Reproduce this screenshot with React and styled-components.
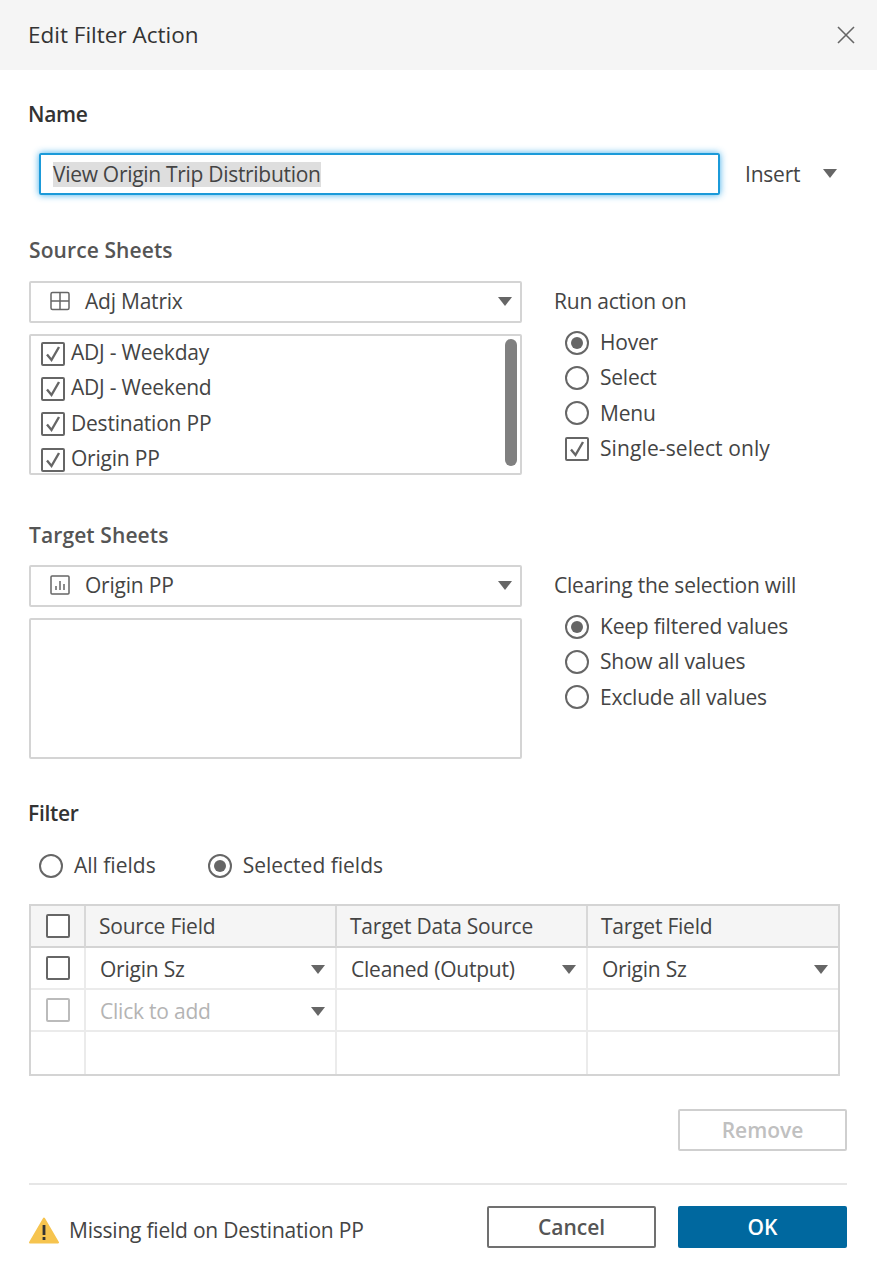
import React from "react";
import styled, { createGlobalStyle } from "styled-components";

const GlobalStyle = createGlobalStyle`
  html, body { margin: 0; padding: 0; background: #fff; }
  body { font-family: "Open Sans", "Noto Sans", sans-serif; color: #444; }
  * { box-sizing: border-box; }
`;

const Dialog = styled.div`
  width: 877px;
  height: 1280px;
  background: #fff;
  overflow: hidden;
  letter-spacing: -0.22px;
`;

const Header = styled.header`
  height: 70px;
  padding: 0 21px 2px 28px;
  display: flex;
  align-items: center;
  justify-content: space-between;
  background: #f5f5f5;
  font-size: 22.5px;
  letter-spacing: 0;
  color: #333;
`;

const CloseIcon = styled.svg`
  margin-top: 2px;
  fill: none;
  stroke: #666;
  stroke-width: 1.6;
`;

const Body = styled.div`
  padding: 0 30px 0 29px;
`;

const SectionTitle = styled.h2`
  margin: ${({ $top }) => $top}px 0 0 ${({ $dark }) => ($dark ? -1 : 0)}px;
  height: 30px;
  line-height: 30px;
  font-size: 21px;
  font-weight: 600;
  letter-spacing: ${({ $dark }) => ($dark ? "-0.3px" : "0.1px")};
  color: ${({ $dark }) => ($dark ? "#333" : "#555")};
`;

const NameRow = styled.div`
  margin-top: 24px;
  padding-left: 10px;
  display: flex;
  align-items: center;
`;

const NameInput = styled.div`
  width: 681px;
  height: 42px;
  padding-left: 12px;
  display: flex;
  align-items: center;
  border: 2px solid #1b9ad9;
  border-radius: 2px;
  box-shadow: 0 0 7px rgba(30, 160, 230, 0.85);
  font-size: 21px;
`;

const Selected = styled.span`
  background: #dedede;
  line-height: 25px;
  letter-spacing: -0.3px;
`;

const InsertButton = styled.div`
  margin-left: 25px;
  width: 92px;
  padding-bottom: 1px;
  display: flex;
  align-items: center;
  justify-content: space-between;
  font-size: 21px;
`;

const Caret = styled.span`
  flex: none;
  width: 0;
  height: 0;
  border-left: 7px solid transparent;
  border-right: 7px solid transparent;
  border-top: 9px solid #666;
`;

const SheetsGrid = styled.div`
  margin-top: ${({ $top }) => $top}px;
  display: grid;
  grid-template-columns: 493px 1fr;
  column-gap: 33px;
`;

const Dropdown = styled.div`
  height: 42px;
  padding: 0 8px 2px 19px;
  display: flex;
  align-items: center;
  border: 2px solid #d4d4d4;
  border-radius: 2px;
  font-size: 21px;
`;

const SheetIcon = styled.svg`
  flex: none;
  width: 20px;
  height: 20px;
  margin-right: 15px;
  fill: none;
  stroke: #666;
  stroke-width: 1.5;
`;

const DropdownLabel = styled.span`
  flex: 1;
`;

const SheetList = styled.div`
  position: relative;
  margin-top: 11px;
  height: 141px;
  padding: 0 0 0 10px;
  border: 2px solid #d4d4d4;
  border-radius: 2px;
  overflow: hidden;
`;

const ScrollThumb = styled.div`
  position: absolute;
  top: 3px;
  right: 3px;
  width: 12px;
  height: 127px;
  border-radius: 6px;
  background: #808080;
`;

const OptionRow = styled.label`
  height: 35.3px;
  display: flex;
  align-items: center;
  gap: ${({ $gap }) => $gap || 6}px;
  font-size: 21px;
  white-space: nowrap;
`;

const OptionText = styled.span`
  margin-top: ${({ $lift }) => -$lift}px;
  letter-spacing: ${({ $spacing }) => $spacing ?? -0.22}px;
`;

const Box = styled.span`
  flex: none;
  width: 24px;
  height: 24px;
  display: flex;
  align-items: center;
  justify-content: center;
  border: 2px solid ${({ $muted }) => ($muted ? "#bbb" : "#666")};
  border-radius: 2px;
  background: #fff;
`;

const CheckMark = styled.svg`
  width: 20px;
  height: 20px;
  fill: none;
  stroke: #666;
  stroke-width: 2.4;
`;

const Radio = styled.span`
  flex: none;
  width: 24px;
  height: 24px;
  display: flex;
  align-items: center;
  justify-content: center;
  border: 2px solid #666;
  border-radius: 50%;

  &::after {
    content: "";
    display: ${({ $on }) => ($on ? "block" : "none")};
    width: 12px;
    height: 12px;
    border-radius: 50%;
    background: #666;
  }
`;

const SideColumn = styled.div`
  padding-top: 2px;
`;

const SideTitle = styled.div`
  margin-left: -1px;
  height: 36px;
  line-height: 36px;
  font-size: 21px;
  white-space: nowrap;
`;

const SideOptions = styled.div`
  margin-top: 6px;
  padding-left: 10px;
`;

const ScopeRow = styled.div`
  margin-top: 20px;
  padding-left: 10px;
  display: flex;
  gap: 52px;
`;

const FieldTable = styled.div`
  margin-top: 21px;
  width: 811px;
  border: 2px solid #d4d4d4;
  display: grid;
  grid-template-columns: 55px 251px 251px 1fr;
`;

const Cell = styled.div`
  height: 42px;
  padding: ${({ $header }) => ($header ? 0 : 2)}px 10px 0 ${({ $header }) => ($header ? 13 : 14)}px;
  display: flex;
  align-items: center;
  justify-content: space-between;
  font-size: 21px;
  color: ${({ $muted }) => ($muted ? "#b4b4b4" : "#444")};
  background: ${({ $header }) => ($header ? "#f5f5f5" : "#fff")};
  border-right: ${({ $last, $header }) =>
    $last ? "0" : `2px solid ${$header ? "#d8d8d8" : "#ebebeb"}`};
  border-bottom: ${({ $header, $end }) =>
    $end ? "0" : `2px solid ${$header ? "#d4d4d4" : "#ebebeb"}`};
`;

const CheckCell = styled(Cell)`
  padding: 0;
  justify-content: center;
`;

const RemoveRow = styled.div`
  margin-top: 33px;
  display: flex;
  justify-content: flex-end;
`;

const Button = styled.button`
  width: 169px;
  height: 42px;
  padding: 0;
  font-family: inherit;
  font-size: 21px;
  font-weight: 600;
  border-radius: 2px;
  border: 2px solid ${({ $variant }) =>
    $variant === "primary" ? "#00689f" : $variant === "disabled" ? "#cfcfcf" : "#707070"};
  background: ${({ $variant }) => ($variant === "primary" ? "#00689f" : "#fff")};
  color: ${({ $variant }) =>
    $variant === "primary" ? "#fff" : $variant === "disabled" ? "#c0c0c0" : "#555"};
`;

const Footer = styled.footer`
  margin-top: 32px;
  padding-top: 21px;
  border-top: 2px solid #e6e6e6;
  display: flex;
  align-items: center;
`;

const Warning = styled.div`
  flex: 1;
  padding-top: 6px;
  display: flex;
  align-items: center;
  gap: 10px;
  font-size: 21px;
  color: #444;
`;

const FooterButtons = styled.div`
  display: flex;
  gap: 22px;
`;

const Check = ({ checked, muted }) => (
  <Box $muted={muted}>
    {checked && (
      <CheckMark viewBox="0 0 20 20">
        <path d="M4 10.5 L8.5 16 L16 3" />
      </CheckMark>
    )}
  </Box>
);

const CheckOption = ({ label }) => (
  <OptionRow>
    <Check checked />
    <OptionText $lift={3}>{label}</OptionText>
  </OptionRow>
);

const RadioOption = ({ label, on, spacing }) => (
  <OptionRow $gap={11}>
    <Radio $on={on} />
    <OptionText $lift={1} $spacing={spacing}>{label}</OptionText>
  </OptionRow>
);

const TableIcon = () => (
  <SheetIcon viewBox="0 0 20 20">
    <rect x="1" y="1.5" width="18" height="17" rx="1.5" />
    <path d="M10 1.5V18.5M1 10H19" />
  </SheetIcon>
);

const BarsIcon = () => (
  <SheetIcon viewBox="0 0 20 20">
    <rect x="1" y="1" width="18" height="18" rx="1" />
    <path d="M6 11V15M10 6V15M14 9V15" />
  </SheetIcon>
);

const App = () => (
  <Dialog>
    <GlobalStyle />
    <Header>
      Edit Filter Action
      <CloseIcon width="20" height="20" viewBox="0 0 20 20">
        <path d="M2 2L18 18M18 2L2 18" />
      </CloseIcon>
    </Header>
    <Body>
      <SectionTitle $dark $top={29}>Name</SectionTitle>
      <NameRow>
        <NameInput>
          <Selected>View Origin Trip Distribution</Selected>
        </NameInput>
        <InsertButton>
          Insert <Caret />
        </InsertButton>
      </NameRow>

      <SectionTitle $top={40}>Source Sheets</SectionTitle>
      <SheetsGrid $top={16}>
        <div>
          <Dropdown>
            <TableIcon />
            <DropdownLabel>Adj Matrix</DropdownLabel>
            <Caret />
          </Dropdown>
          <SheetList>
            <CheckOption label="ADJ - Weekday" />
            <CheckOption label="ADJ - Weekend" />
            <CheckOption label="Destination PP" />
            <CheckOption label="Origin PP" />
            <ScrollThumb />
          </SheetList>
        </div>
        <SideColumn>
          <SideTitle>Run action on</SideTitle>
          <SideOptions>
            <RadioOption label="Hover" on />
            <RadioOption label="Select" />
            <RadioOption label="Menu" />
            <OptionRow $gap={11}>
              <Check checked />
              <OptionText $lift={1} $spacing={0.1}>Single-select only</OptionText>
            </OptionRow>
          </SideOptions>
        </SideColumn>
      </SheetsGrid>

      <SectionTitle $top={45}>Target Sheets</SectionTitle>
      <SheetsGrid $top={15}>
        <div>
          <Dropdown>
            <BarsIcon />
            <DropdownLabel>Origin PP</DropdownLabel>
            <Caret />
          </Dropdown>
          <SheetList />
        </div>
        <SideColumn>
          <SideTitle>Clearing the selection will</SideTitle>
          <SideOptions>
            <RadioOption label="Keep filtered values" on />
            <RadioOption label="Show all values" />
            <RadioOption label="Exclude all values" />
          </SideOptions>
        </SideColumn>
      </SheetsGrid>

      <SectionTitle $dark $top={39}>Filter</SectionTitle>
      <ScopeRow>
        <RadioOption label="All fields" spacing={0} />
        <RadioOption label="Selected fields" on spacing={0} />
      </ScopeRow>

      <FieldTable>
        <CheckCell $header><Check /></CheckCell>
        <Cell $header>Source Field</Cell>
        <Cell $header>Target Data Source</Cell>
        <Cell $header $last>Target Field</Cell>

        <CheckCell><Check /></CheckCell>
        <Cell>Origin Sz <Caret /></Cell>
        <Cell>Cleaned (Output) <Caret /></Cell>
        <Cell $last>Origin Sz <Caret /></Cell>

        <CheckCell><Check muted /></CheckCell>
        <Cell $muted>Click to add <Caret /></Cell>
        <Cell />
        <Cell $last />

        <Cell $end />
        <Cell $end />
        <Cell $end />
        <Cell $end $last />
      </FieldTable>

      <RemoveRow>
        <Button $variant="disabled">Remove</Button>
      </RemoveRow>

      <Footer>
        <Warning>
          <svg width="30" height="27" viewBox="0 0 30 27">
            <path d="M15 1.5 L29 25.5 H1 Z" fill="#f6c44f" stroke="#f6c44f" strokeWidth="2" strokeLinejoin="round" />
            <rect x="13.6" y="8" width="2.8" height="10" fill="#333" />
            <rect x="13.6" y="20" width="2.8" height="3" fill="#333" />
          </svg>
          Missing field on Destination PP
        </Warning>
        <FooterButtons>
          <Button>Cancel</Button>
          <Button $variant="primary">OK</Button>
        </FooterButtons>
      </Footer>
    </Body>
  </Dialog>
);

export default App;
